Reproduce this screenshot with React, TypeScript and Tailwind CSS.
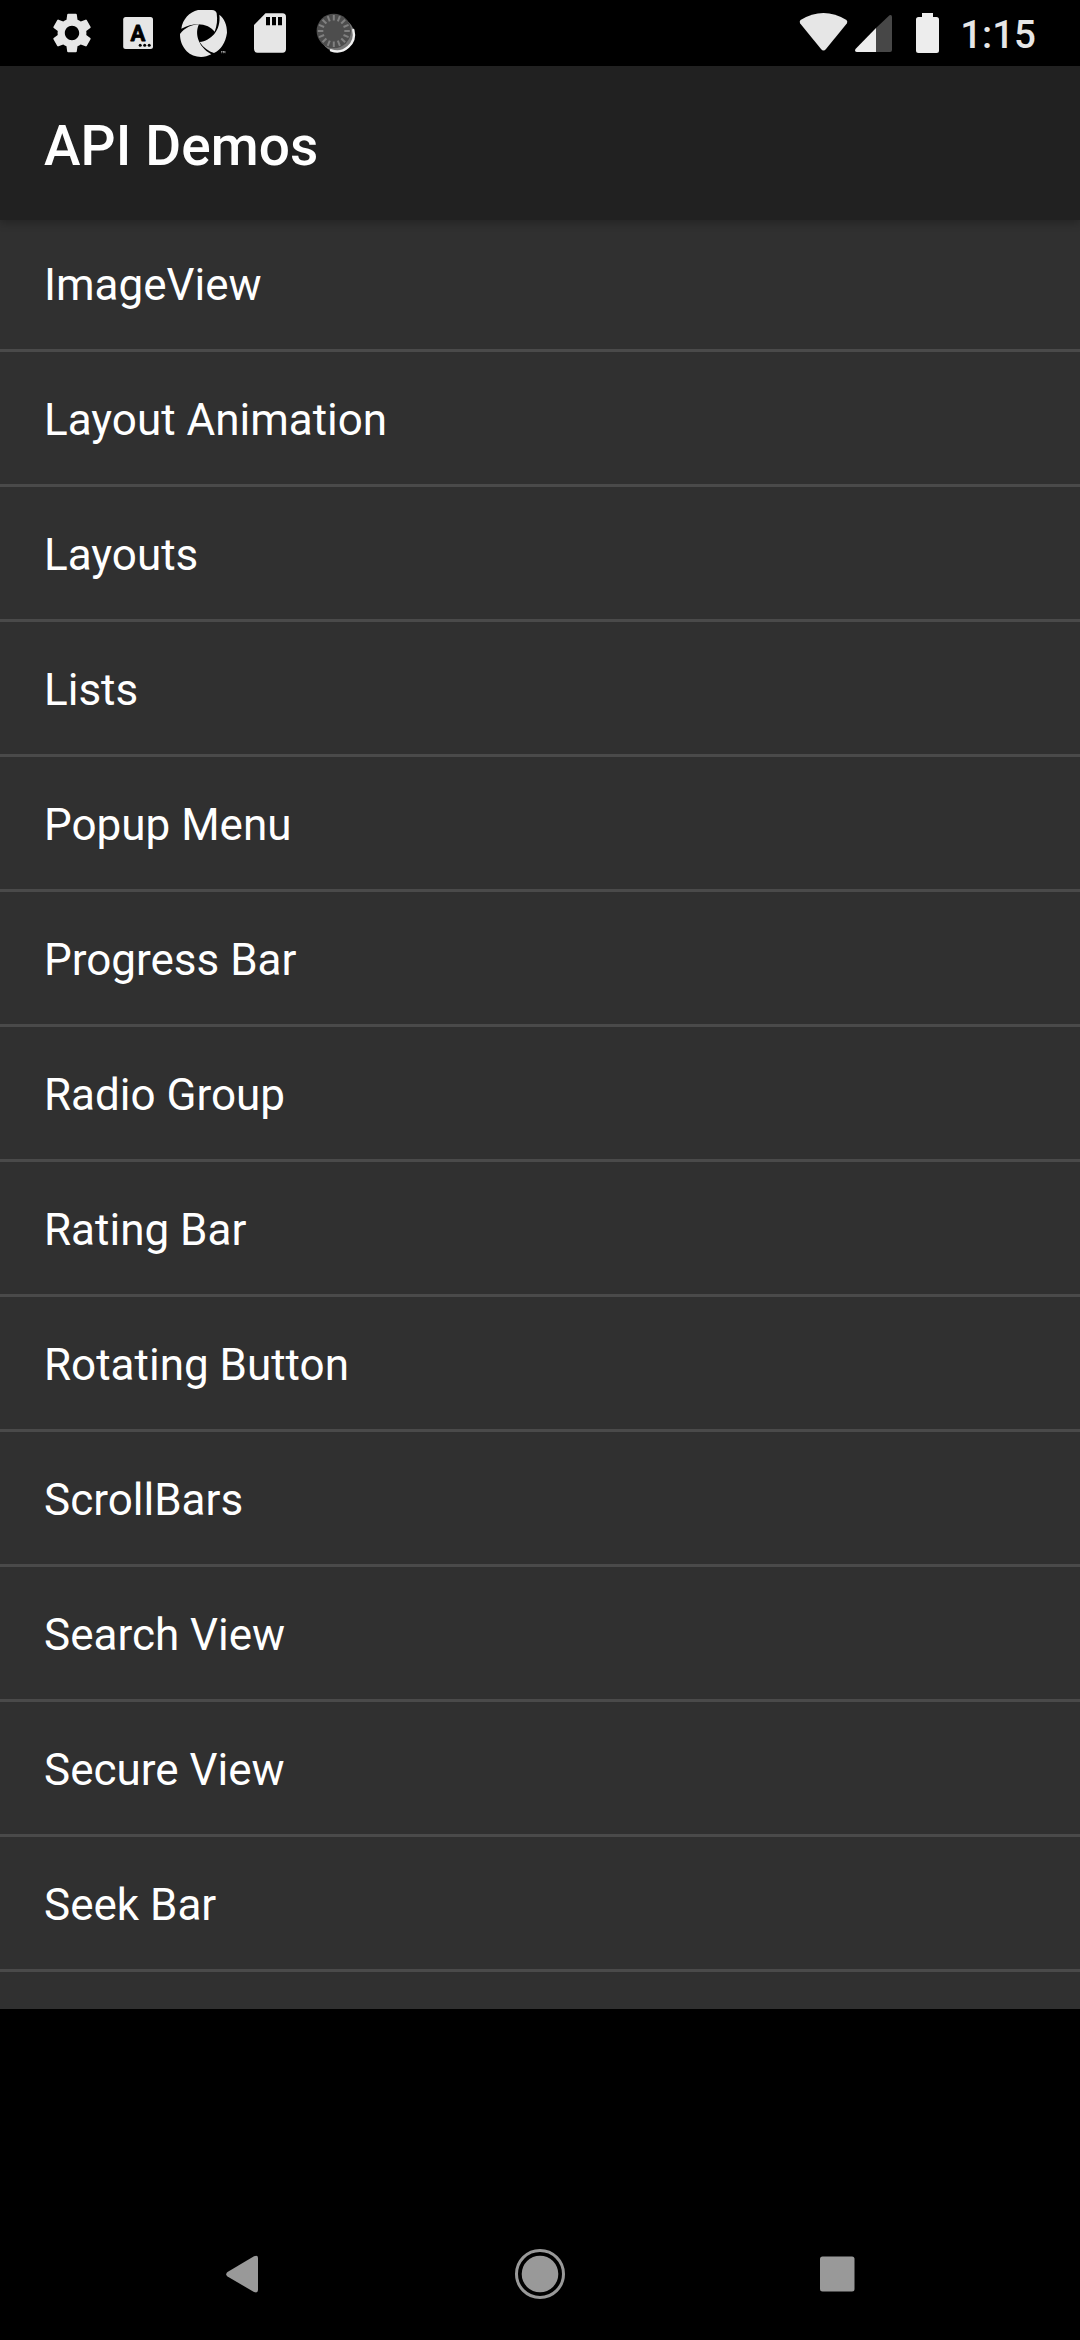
import React from "react";
import { MdSettings } from "react-icons/md";

const items = [
  "ImageView",
  "Layout Animation",
  "Layouts",
  "Lists",
  "Popup Menu",
  "Progress Bar",
  "Radio Group",
  "Rating Bar",
  "Rotating Button",
  "ScrollBars",
  "Search View",
  "Secure View",
  "Seek Bar",
];

function KeyboardIcon() {
  return (
    <svg className="h-[66px] w-[66px]" viewBox="105 0 66 66">
      <rect x="123.2" y="17" width="29.8" height="32" rx="2.5" fill="#e6e6e6" />
      <text x="138" y="40.5" textAnchor="middle" fontFamily="Roboto, sans-serif" fontSize="22" fontWeight="700" fill="#000" stroke="#000" strokeWidth="0.8" strokeLinejoin="round">A</text>
      <circle cx="140.2" cy="45.3" r="1.5" fill="#000" />
      <circle cx="144.7" cy="45.3" r="1.5" fill="#000" />
      <circle cx="149.2" cy="45.3" r="1.5" fill="#000" />
    </svg>
  );
}

function ApertureIcon() {
  return (
    <svg className="h-[66px] w-[66px]" viewBox="171 0 66 66">
      <g transform="translate(160 0) scale(0.33333)" fill="#e6e6e6">
        <path d="M64 86C68 58 88 36 114 30H156Q168 31 170 40C173 60 171 78 164 95C148 73 108 62 64 86Z" />
        <path d="M178 44C193 55 201 74 201 98C197 128 182 150 162 159C146 154 130 143 119 126C152 122 184 92 178 44Z" />
        <path d="M60 102C74 84 96 73 117 73C105 96 110 138 154 163C130 176 98 172 80 154C66 138 60 122 60 102Z" />
        <path d="M183 153h5v1.500h-1.500v5h-2v-5h-1.500zM189 153h2l1.500 3 1.500-3h2v6.500h-1.500v-4l-1.500 3h-1l-1.500-3v4h-1.500z" opacity="0.8" />
      </g>
    </svg>
  );
}

function SdCardIcon() {
  return (
    <svg className="h-[66px] w-[66px]" viewBox="237 0 66 66">
      <path d="M265.500 13.300H282.500Q286 13.300 286 17V49Q286 52.700 282.500 52.700H257.500Q254 52.700 254 49V25Z" fill="#e6e6e6" />
      <path d="M266 17h4v8.300h-4zM272 17h4v8.300h-4zM278 17h4v8.300h-4z" fill="#000" />
    </svg>
  );
}

function SpinnerIcon() {
  const ticks = Array.from({ length: 16 }, (_, i) => i * 22.5);
  return (
    <svg className="h-[66px] w-[66px]" viewBox="303 0 66 66">
      <circle cx="337.300" cy="34.800" r="17" fill="#777" />
      <path d="M353.300 30A17 17 0 0 1 331 50.300" fill="none" stroke="#f2f2f2" strokeWidth="2.400" strokeLinecap="round" />
      <circle cx="333.800" cy="31" r="17.200" fill="#4d4d4d" />
      {ticks.map((a) => (
        <path key={a} d="M333.800 15v5.500" stroke="#808080" strokeWidth="2" transform={`rotate(${a} 333.800 31)`} />
      ))}
    </svg>
  );
}

function StatusBar() {
  return (
    <div className="flex h-[66px] shrink-0 items-center justify-between bg-black">
      <div className="flex items-center pl-[39px]">
        <div className="flex h-[66px] w-[66px] items-center justify-center">
          <MdSettings className="h-12 w-12 text-[#e6e6e6]" />
        </div>
        <KeyboardIcon />
        <ApertureIcon />
        <SdCardIcon />
        <SpinnerIcon />
      </div>
      <div className="flex items-center pr-[44px]">
        <svg className="h-[66px] w-[165px]" viewBox="795 0 165 66">
          <path d="M800.500 20Q823.500 6 846.500 20Q848 21.500 846.800 23.500L826 49Q823.500 52 821 49L800.200 23.500Q799 21.500 800.500 20Z" fill="#e6e6e6" />
          <path d="M876 28V52H857Q854 51.500 855.500 49Z" fill="#ededed" />
          <path d="M876 28L889.500 15.300Q892 14.500 892 17V50Q892 52 890 52H876Z" fill="#474747" />
          <path d="M922 13H933V17H936.500Q939 17 939 19.500V50.500Q939 53 936.500 53H918.500Q916 53 916 50.500V19.500Q916 17 918.500 17H922Z" fill="#ededed" />
        </svg>
        <span className="pt-[3px] text-[38.5px] leading-[46px] font-medium text-[#e6e6e6]">1:15</span>
      </div>
    </div>
  );
}

export default function App() {
  return (
    <div className="flex h-[2340px] w-[1080px] flex-col overflow-hidden bg-black font-['Roboto',sans-serif] text-white">
      <StatusBar />
      <header className="z-10 flex h-[154px] shrink-0 items-center bg-[#212121] pt-1.5 pl-[44px] shadow-[0_3px_8px_rgba(0,0,0,0.25)]">
        <h1 className="text-[55px] leading-[64px] font-medium tracking-[0.1px]">API Demos</h1>
      </header>
      <ul className="h-[1789px] shrink-0 overflow-hidden bg-[#303030]">
        {items.map((item) => (
          <li
            key={item}
            className="flex h-[135px] items-center border-b-[3px] border-[#4a4a4a] pt-1 pl-[44px] text-[44px] leading-[52px] first:h-[132px] first:pt-px"
          >
            {item}
          </li>
        ))}
      </ul>
      <nav className="mt-[199px] flex h-[132px] items-center">
        <svg className="h-[132px] w-full" viewBox="0 2208 1080 132" fill="#999">
          <path d="M227.500 2272Q225 2274 227.500 2276.500L254 2292Q258 2293.500 258 2290V2258Q258 2254.500 254 2256.300Z" />
          <circle cx="540" cy="2274" r="18.300" />
          <circle cx="540" cy="2274" r="23.500" fill="none" stroke="#999" strokeWidth="3" />
          <rect x="820" y="2256.500" width="34.500" height="35" rx="2.500" />
        </svg>
      </nav>
    </div>
  );
}
